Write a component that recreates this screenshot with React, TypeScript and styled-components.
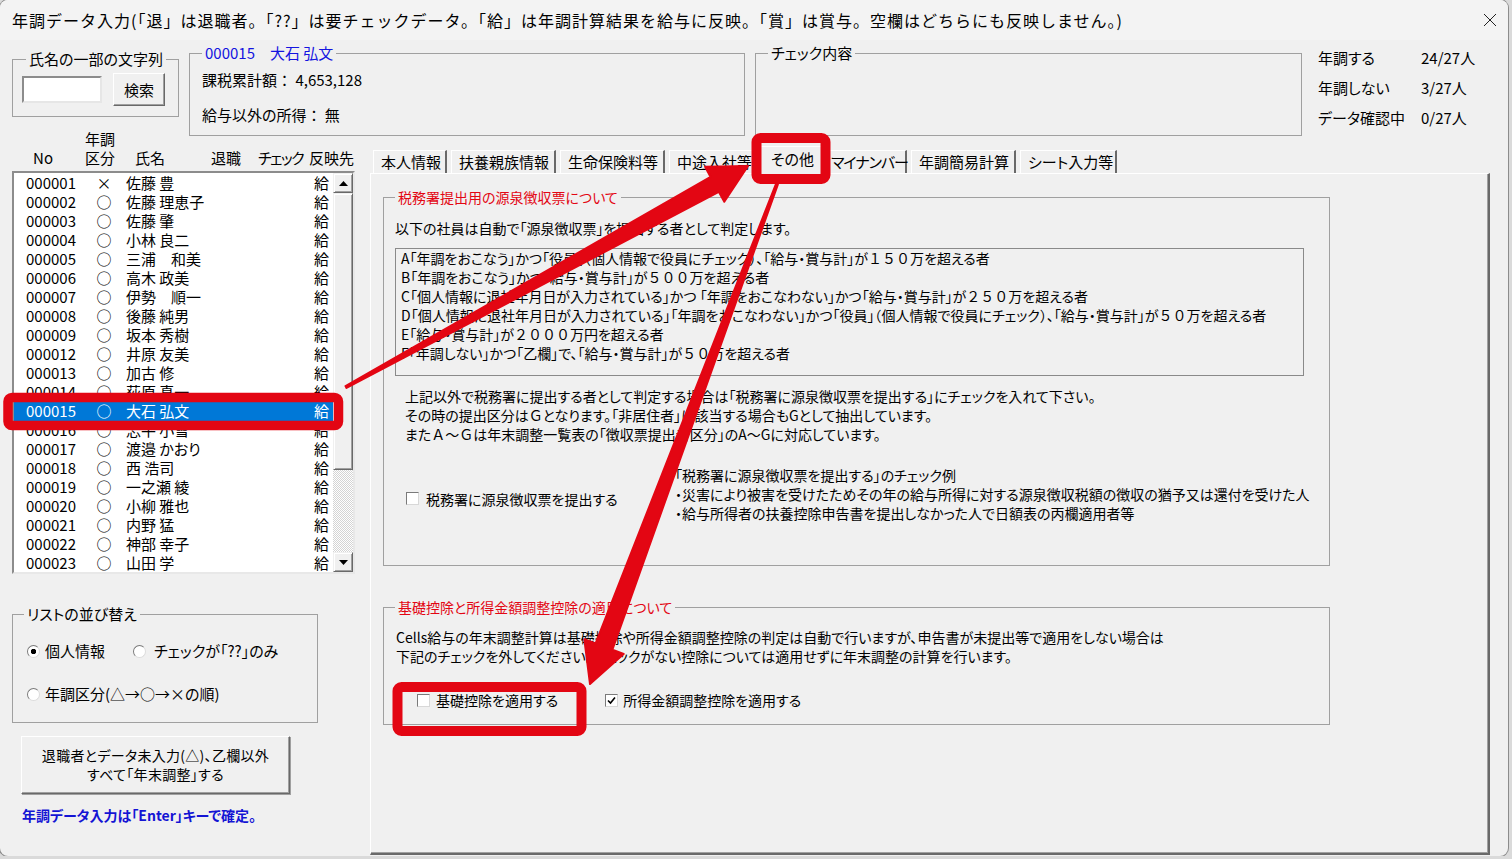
import * as React from 'react';
import styled, { createGlobalStyle } from 'styled-components';

const GlobalStyle = createGlobalStyle`
  html, body {
    margin: 0;
    padding: 0;
  }
  body {
    background: #dadada;
    font-family: "Noto Sans CJK JP", "Noto Sans", sans-serif;
    font-feature-settings: "palt";
    color: #000;
  }
`;

const Window = styled.div`
  position: relative;
  width: 1508px;
  height: 856px;
  background: #f0f0f0;
  border-radius: 8px;
  box-shadow: 0 0 0 1px #8c8c8c;
  overflow: hidden;
  display: flex;
  flex-direction: column;
`;

const TitleBar = styled.div`
  flex: none;
  height: 40px;
  display: flex;
  align-items: center;
  justify-content: space-between;
  padding: 0 11px 0 12px;
  background: #f3f3f3;
`;

const TitleText = styled.span`
  font-size: 16px;
  line-height: 20px;
  letter-spacing: 1px;
  font-feature-settings: normal;
`;

const Body = styled.div`
  flex: 1;
  min-height: 0;
  display: flex;
  flex-direction: column;
  padding: 3px 18px 1px 12px;
`;

const TopRow = styled.div`
  flex: none;
  height: 93px;
  display: flex;
  align-items: flex-start;
`;

const Frame = styled.fieldset<{ $w: number; $h: number; $pl?: number; $mt?: number; $ml?: number }>`
  box-sizing: border-box;
  flex: none;
  margin: ${(p) => p.$mt || 0}px 0 0 ${(p) => p.$ml || 0}px;
  min-width: 0;
  width: ${(p) => p.$w}px;
  height: ${(p) => p.$h}px;
  padding: 0 0 0 ${(p) => (p.$pl === undefined ? 12 : p.$pl)}px;
  border: 1px solid #a0a0a0;
`;

const Legend = styled.legend<{ $color?: string; $size?: number; $ml?: number }>`
  margin-left: ${(p) => p.$ml || 0}px;
  padding: 0 3px;
  font-size: ${(p) => p.$size || 15}px;
  line-height: 20px;
  color: ${(p) => p.$color || '#000'};
`;

const SearchRow = styled.div`
  display: flex;
  align-items: center;
  gap: 11px;
  margin-top: 4px;
`;

const TextInput = styled.div`
  box-sizing: border-box;
  width: 80px;
  height: 27px;
  background: #fff;
  border: 2px solid;
  border-color: #8c8c8c #e6e6e6 #e6e6e6 #8c8c8c;
`;

const PushButton = styled.button<{ $w: number; $h: number }>`
  box-sizing: border-box;
  width: ${(p) => p.$w}px;
  height: ${(p) => p.$h}px;
  padding: 0;
  background: #f0f0f0;
  border: 1px solid;
  border-color: #fff #696969 #696969 #fff;
  box-shadow: inset -1px -1px 0 #a0a0a0;
  font-family: inherit;
  font-feature-settings: "palt";
  font-size: 15px;
  line-height: 19px;
  color: #000;
`;

const InfoLine = styled.div<{ $mt: number }>`
  margin-top: ${(p) => p.$mt}px;
  font-size: 15px;
  line-height: 20px;
  white-space: pre;
`;

const Stats = styled.div`
  margin: 5px 0 0 16px;
  display: grid;
  grid-template-columns: 103px auto;
  row-gap: 10px;
  font-size: 15px;
  line-height: 20px;
`;

const Main = styled.div`
  flex: 1;
  min-height: 0;
  margin-top: -7px;
  display: grid;
  grid-template-columns: 345px 1fr;
  column-gap: 13px;
`;

const LeftCol = styled.div`
  display: flex;
  flex-direction: column;
  align-items: flex-start;
`;

const ListHeader = styled.div`
  box-sizing: border-box;
  width: 345px;
  height: 42px;
  padding-bottom: 7px;
  display: grid;
  grid-template-columns: 62px 52px 76px 47px 54px 1fr;
  align-items: end;
  font-size: 15px;
  line-height: 19px;
`;

const HeadCell = styled.div<{ $center?: boolean; $pl?: number; $tight?: boolean }>`
  text-align: ${(p) => (p.$center ? 'center' : 'left')};
  padding-left: ${(p) => p.$pl || 0}px;
  letter-spacing: ${(p) => (p.$tight ? '-1.5px' : 'normal')};
  white-space: nowrap;
`;

const ListBox = styled.div`
  box-sizing: border-box;
  width: 343px;
  height: 403px;
  background: #fff;
  border: 2px solid;
  border-color: #8c8c8c #e8e8e8 #e8e8e8 #8c8c8c;
  display: flex;
  overflow: hidden;
`;

const Rows = styled.div`
  flex: 1;
  min-width: 0;
  overflow: hidden;
`;

const Row = styled.div<{ $selected?: boolean }>`
  height: 19.05px;
  display: grid;
  grid-template-columns: 58px 40px 1fr auto;
  align-items: center;
  padding: 0 4px 0 12px;
  font-size: 15px;
  line-height: 18px;
  white-space: pre;
  background: ${(p) => (p.$selected ? '#0078d7' : 'transparent')};
  color: ${(p) => (p.$selected ? '#fff' : '#000')};
`;

const Mark = styled.span`
  text-align: center;
`;

const Name = styled.span`
  padding-left: 2px;
`;

const ScrollBar = styled.div`
  flex: none;
  width: 20px;
  display: flex;
  flex-direction: column;
`;

const ScrollPart = styled.div<{ $h?: number }>`
  box-sizing: border-box;
  height: ${(p) => p.$h || 20}px;
  background: #f0f0f0;
  border: 1px solid;
  border-color: #f0f0f0 #696969 #696969 #f0f0f0;
  box-shadow: inset 1px 1px 0 #fff, inset -1px -1px 0 #a0a0a0;
  display: flex;
  align-items: center;
  justify-content: center;
`;

const Track = styled.div`
  flex: 1;
  background-color: #fff;
  background-image: repeating-conic-gradient(#d4d4d4 0 25%, #fff 0 50%);
  background-size: 2px 2px;
`;

const RadioRow = styled.div<{ $mt: number }>`
  margin-top: ${(p) => p.$mt}px;
  height: 20px;
  display: flex;
  align-items: center;
  gap: 28px;
`;

const OptionLabel = styled.label<{ $gap?: number; $size?: number }>`
  display: flex;
  align-items: center;
  gap: ${(p) => p.$gap || 6}px;
  font-size: ${(p) => p.$size || 15}px;
  line-height: 20px;
  white-space: nowrap;
`;

const RadioDot = styled.span<{ $on?: boolean }>`
  flex: none;
  box-sizing: border-box;
  width: 13px;
  height: 13px;
  border-radius: 50%;
  border: 1px solid;
  border-color: #7a7a7a #dcdcdc #dcdcdc #7a7a7a;
  background: ${(p) => (p.$on ? 'radial-gradient(circle, #000 0 2.4px, #fff 3px)' : '#fff')};
`;

const BigButton = styled(PushButton)`
  margin: 13px 0 0 9px;
  font-size: 14px;
  letter-spacing: 0.3px;
  box-shadow: inset -1px -1px 0 #a0a0a0, 1px 1px 0 #a0a0a0;
`;

const Note = styled.div`
  margin: 11px 0 0 10px;
  font-size: 14px;
  line-height: 20px;
  font-weight: bold;
  color: #1414d4;
`;

const RightCol = styled.div`
  display: flex;
  flex-direction: column;
  min-height: 0;
`;

const TabStrip = styled.div`
  flex: none;
  margin-top: 17px;
  height: 27px;
  padding-left: 3px;
  display: flex;
  align-items: flex-end;
`;

const Tab = styled.div<{ $active?: boolean; $w: number }>`
  position: relative;
  z-index: ${(p) => (p.$active ? 1 : 0)};
  box-sizing: border-box;
  flex: none;
  width: ${(p) => p.$w}px;
  height: ${(p) => (p.$active ? 28 : 23)}px;
  margin: 0 ${(p) => (p.$active ? 0 : 4)}px ${(p) => (p.$active ? -1 : 0)}px 0;
  padding: 0 0 ${(p) => (p.$active ? 3 : 0)}px ${(p) => (p.$active ? 10 : 7)}px;
  display: flex;
  align-items: center;
  background: #f0f0f0;
  border-top: 1px solid #fff;
  border-left: 1px solid #fff;
  border-right: 2px solid #696969;
  font-size: 15px;
  line-height: 20px;
  white-space: nowrap;
`;

const TabLabel = styled.span<{ $squeeze?: boolean }>`
  letter-spacing: ${(p) => (p.$squeeze ? '-1px' : 'normal')};
`;

const TabPage = styled.div`
  flex: 1;
  min-height: 0;
  box-sizing: border-box;
  border-top: 1px solid #fff;
  border-left: 1px solid #fff;
  border-right: 2px solid #696969;
  border-bottom: 2px solid #696969;
  box-shadow: inset -1px -1px 0 #a0a0a0;
  padding: 13px 0 0 12px;
`;

const Text = styled.div<{ $mt?: number; $ml?: number }>`
  margin: ${(p) => p.$mt || 0}px 0 0 ${(p) => p.$ml || 0}px;
  font-size: 14px;
  line-height: 19px;
  white-space: pre;
`;

const Wide = styled.span`
  font-feature-settings: normal;
`;

const RuleBox = styled.div`
  box-sizing: border-box;
  margin-top: 10px;
  width: 909px;
  height: 128px;
  padding-left: 5px;
  border: 1px solid #8a8a8a;
  font-size: 14px;
  line-height: 19px;
  white-space: pre;
`;

const SubmitRow = styled.div`
  margin: 22px 0 0 11px;
  display: grid;
  grid-template-columns: 269px 1fr;
  align-items: center;
`;

const SubmitCell = styled.div`
  padding-top: 8px;
`;

const ApplyRow = styled.div`
  margin: 24px 0 0 21px;
  height: 20px;
  display: flex;
  align-items: center;
  gap: 47px;
`;

const CheckBox = styled.span`
  flex: none;
  box-sizing: border-box;
  width: 13px;
  height: 13px;
  background: #fff;
  border: 1px solid;
  border-color: #7a7a7a #d8d8d8 #d8d8d8 #7a7a7a;
  display: flex;
  align-items: center;
  justify-content: center;
`;

const Overlay = styled.svg`
  position: absolute;
  left: 0;
  top: 0;
  width: 1508px;
  height: 856px;
  pointer-events: none;
  z-index: 10;
`;

const RED = '#e30613';

const employees: [string, string, string][] = [
  ['000001', '×', '佐藤 豊'],
  ['000002', '○', '佐藤 理恵子'],
  ['000003', '○', '佐藤 肇'],
  ['000004', '○', '小林 良二'],
  ['000005', '○', '三浦　和美'],
  ['000006', '○', '高木 政美'],
  ['000007', '○', '伊勢　順一'],
  ['000008', '○', '後藤 純男'],
  ['000009', '○', '坂本 秀樹'],
  ['000012', '○', '井原 友美'],
  ['000013', '○', '加古 修'],
  ['000014', '○', '荻原 真一'],
  ['000015', '○', '大石 弘文'],
  ['000016', '○', '志平 小雪'],
  ['000017', '○', '渡邉 かおり'],
  ['000018', '○', '西 浩司'],
  ['000019', '○', '一之瀬 綾'],
  ['000020', '○', '小柳 雅也'],
  ['000021', '○', '内野 猛'],
  ['000022', '○', '神部 幸子'],
  ['000023', '○', '山田 学'],
];

const tabs: [string, number][] = [
  ['本人情報', 74],
  ['扶養親族情報', 105],
  ['生命保険料等', 105],
  ['中途入社等', 87],
  ['その他', 63],
  ['マイナンバー', 84],
  ['年調簡易計算', 105],
  ['シート入力等', 97],
];

// tapered arrow: thin at the tail, wide just before the head
const arrowPoints = (tx: number, ty: number, hx: number, hy: number, w0: number, w1: number, headW: number, headL: number) => {
  const len = Math.hypot(hx - tx, hy - ty);
  const ux = (hx - tx) / len;
  const uy = (hy - ty) / len;
  const nx = -uy;
  const ny = ux;
  const bx = hx - ux * headL;
  const by = hy - uy * headL;
  const pts = [
    [tx + (nx * w0) / 2, ty + (ny * w0) / 2],
    [bx + (nx * w1) / 2, by + (ny * w1) / 2],
    [bx + (nx * headW) / 2, by + (ny * headW) / 2],
    [hx, hy],
    [bx - (nx * headW) / 2, by - (ny * headW) / 2],
    [bx - (nx * w1) / 2, by - (ny * w1) / 2],
    [tx - (nx * w0) / 2, ty - (ny * w0) / 2],
  ];
  return pts.map((p) => p.map((v) => v.toFixed(1)).join(',')).join(' ');
};

const Arrow = ({ dir }: { dir: 'up' | 'down' }) => (
  <svg width="9" height="5" viewBox="0 0 9 5">
    <polygon points={dir === 'up' ? '0,5 4.5,0 9,5' : '0,0 4.5,5 9,0'} fill="#000" />
  </svg>
);

const Tick = () => (
  <svg width="9" height="9" viewBox="0 0 9 9">
    <polyline points="1,4.5 3.5,7 8,1.5" fill="none" stroke="#000" strokeWidth="1.6" />
  </svg>
);

const App = () => {
  return (
    <>
      <GlobalStyle />
      <Window>
        <TitleBar>
          <TitleText>年調データ入力(「退」は退職者。「??」は要チェックデータ。「給」は年調計算結果を給与に反映。「賞」は賞与。空欄はどちらにも反映しません。)</TitleText>
          <svg width="14" height="14" viewBox="0 0 14 14">
            <path d="M1 1 L13 13 M13 1 L1 13" stroke="#222" strokeWidth="1" />
          </svg>
        </TitleBar>

        <Body>
          <TopRow>
            <Frame $w={167} $h={68} $pl={9} $mt={6}>
              <Legend $ml={4}>氏名の一部の文字列</Legend>
              <SearchRow>
                <TextInput />
                <PushButton $w={52} $h={33}>検索</PushButton>
              </SearchRow>
            </Frame>

            <Frame $w={556} $h={93} $ml={10}>
              <Legend $color="#1414e0">000015　大石 弘文</Legend>
              <InfoLine $mt={7}>
                課税累計額<Wide>：</Wide> 4,653,128
              </InfoLine>
              <InfoLine $mt={15}>
                給与以外の所得<Wide>：</Wide> 無
              </InfoLine>
            </Frame>

            <Frame $w={547} $h={93} $ml={10}>
              <Legend>チェック内容</Legend>
            </Frame>

            <Stats>
              <span>年調する</span>
              <span>24/27人</span>
              <span>年調しない</span>
              <span>3/27人</span>
              <span>データ確認中</span>
              <span>0/27人</span>
            </Stats>
          </TopRow>

          <Main>
            <LeftCol>
              <ListHeader>
                <HeadCell $center>No</HeadCell>
                <HeadCell $center>
                  年調
                  <br />
                  区分
                </HeadCell>
                <HeadCell $pl={9}>氏名</HeadCell>
                <HeadCell $pl={9}>退職</HeadCell>
                <HeadCell $pl={9} $tight>チェック</HeadCell>
                <HeadCell $pl={6}>反映先</HeadCell>
              </ListHeader>

              <ListBox>
                <Rows>
                  {employees.map(([no, mark, name]) => (
                    <Row key={no} $selected={no === '000015'}>
                      <span>{no}</span>
                      <Mark>{mark}</Mark>
                      <Name>{name}</Name>
                      <span>給</span>
                    </Row>
                  ))}
                </Rows>
                <ScrollBar>
                  <ScrollPart>
                    <Arrow dir="up" />
                  </ScrollPart>
                  <ScrollPart $h={277} />
                  <Track />
                  <ScrollPart>
                    <Arrow dir="down" />
                  </ScrollPart>
                </ScrollBar>
              </ListBox>

              <Frame $w={306} $h={119} $pl={14} $mt={30}>
                <Legend $ml={-3}>リストの並び替え</Legend>
                <RadioRow $mt={17}>
                  <OptionLabel $gap={5}>
                    <RadioDot $on />
                    個人情報
                  </OptionLabel>
                  <OptionLabel $gap={8}>
                    <RadioDot />
                    チェックが「??」のみ
                  </OptionLabel>
                </RadioRow>
                <RadioRow $mt={23}>
                  <OptionLabel $gap={5}>
                    <RadioDot />
                    年調区分(△→○→×の順)
                  </OptionLabel>
                </RadioRow>
              </Frame>

              <BigButton $w={269} $h={58}>
                退職者とデータ未入力(△)、乙欄以外
                <br />
                すべて「年末調整」する
              </BigButton>

              <Note>年調データ入力は「Enter」キーで確定。</Note>
            </LeftCol>

            <RightCol>
              <TabStrip>
                {tabs.map(([t, w]) => (
                  <Tab key={t} $w={w} $active={t === 'その他'}>
                    <TabLabel $squeeze={t === 'マイナンバー'}>{t}</TabLabel>
                  </Tab>
                ))}
              </TabStrip>

              <TabPage>
                <Frame $w={947} $h={379} $pl={11}>
                  <Legend $color={RED} $size={14}>税務署提出用の源泉徴収票について</Legend>
                  <Text $mt={12}>以下の社員は自動で「源泉徴収票」を提出する者として判定します。</Text>
                  <RuleBox>
                    A「年調をおこなう」かつ「役員」<Wide>（</Wide>個人情報で役員にチェック<Wide>）</Wide>、「給与・賞与計」が<Wide>１５０</Wide>万を超える者
                    {'\n'}B「年調をおこなう」かつ「給与・賞与計」が<Wide>５００</Wide>万を超える者
                    {'\n'}C「個人情報に退社年月日が入力されている」かつ 「年調をおこなわない」かつ「給与・賞与計」が<Wide>２５０</Wide>万を超える者
                    {'\n'}D「個人情報に退社年月日が入力されている」「年調をおこなわない」かつ「役員」<Wide>（</Wide>個人情報で役員にチェック<Wide>）</Wide>、「給与・賞与計」が<Wide>５０</Wide>万を超える者
                    {'\n'}E「給与・賞与計」が<Wide>２０００</Wide>万円を超える者
                    {'\n'}F「年調しない」かつ「乙欄」で、「給与・賞与計」が<Wide>５０</Wide>万を超える者
                  </RuleBox>
                  <Text $mt={11} $ml={10}>
                    上記以外で税務署に提出する者として判定する場合は「税務署に源泉徴収票を提出する」にチェックを入れて下さい。
                    {'\n'}その時の提出区分は<Wide>Ｇ</Wide>となります。「非居住者」に該当する場合もGとして抽出しています。
                    {'\n'}また<Wide>Ａ～Ｇ</Wide>は年末調整一覧表の「徴収票提出者区分」のA～Gに対応しています。
                  </Text>
                  <SubmitRow>
                    <SubmitCell>
                      <OptionLabel $gap={7} $size={14}>
                        <CheckBox />
                        税務署に源泉徴収票を提出する
                      </OptionLabel>
                    </SubmitCell>
                    <Text>
                      「税務署に源泉徴収票を提出する」のチェック例
                      {'\n'}・災害により被害を受けたためその年の給与所得に対する源泉徴収税額の徴収の猶予又は還付を受けた人
                      {'\n'}・給与所得者の扶養控除申告書を提出しなかった人で日額表の丙欄適用者等
                    </Text>
                  </SubmitRow>
                </Frame>

                <Frame $w={947} $h={128} $pl={12} $mt={31}>
                  <Legend $color={RED} $size={14} $ml={-1}>基礎控除と所得金額調整控除の適用について</Legend>
                  <Text $mt={11}>
                    Cells給与の年末調整計算は基礎控除や所得金額調整控除の判定は自動で行いますが、申告書が未提出等で適用をしない場合は
                    {'\n'}下記のチェックを外してください。チェックがない控除については適用せずに年末調整の計算を行います。
                  </Text>
                  <ApplyRow>
                    <OptionLabel $size={14}>
                      <CheckBox />
                      基礎控除を適用する
                    </OptionLabel>
                    <OptionLabel $gap={5} $size={14}>
                      <CheckBox>
                        <Tick />
                      </CheckBox>
                      所得金額調整控除を適用する
                    </OptionLabel>
                  </ApplyRow>
                </Frame>
              </TabPage>
            </RightCol>
          </Main>
        </Body>

        <Overlay viewBox="0 0 1508 856">
          <rect x="8" y="397.5" width="330.5" height="28" rx="4" fill="none" stroke={RED} strokeWidth="9.5" />
          <rect x="756.5" y="138" width="69" height="41" rx="4" fill="none" stroke={RED} strokeWidth="10" />
          <rect x="397.5" y="687" width="184" height="44" rx="4" fill="none" stroke={RED} strokeWidth="10" />
          <polygon
            points={arrowPoints(346, 387, 748, 166, 2, 17, 40, 38)}
            fill={RED}
            stroke={RED}
            strokeWidth="2"
            strokeLinejoin="round"
          />
          <polygon
            points={arrowPoints(777, 184, 590, 684, 2, 18, 42, 40)}
            fill={RED}
            stroke={RED}
            strokeWidth="2"
            strokeLinejoin="round"
          />
        </Overlay>
      </Window>
    </>
  );
};

export default App;
